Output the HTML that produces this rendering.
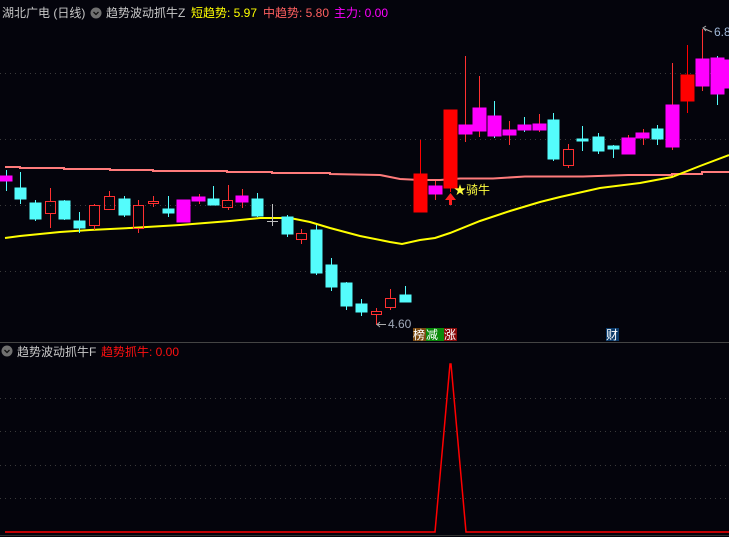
<!DOCTYPE html>
<html><head><meta charset="utf-8"><style>
html,body{margin:0;padding:0;background:#04040c;width:729px;height:537px;overflow:hidden}
svg{display:block}
text{font-family:"Liberation Sans","Noto Sans CJK SC",sans-serif}
</style></head><body>
<svg width="729" height="537" viewBox="0 0 729 537" xmlns="http://www.w3.org/2000/svg">
<rect width="729" height="537" fill="#04040c"/>
<g stroke="#3a3a3a" stroke-dasharray="1,4" stroke-width="1">
<line x1="0" y1="73.5" x2="729" y2="73.5"/><line x1="0" y1="139.5" x2="729" y2="139.5"/>
<line x1="0" y1="205.5" x2="729" y2="205.5"/><line x1="0" y1="271.5" x2="729" y2="271.5"/>
<line x1="0" y1="398.5" x2="729" y2="398.5"/><line x1="0" y1="431.5" x2="729" y2="431.5"/>
<line x1="0" y1="465.5" x2="729" y2="465.5"/><line x1="0" y1="498.5" x2="729" y2="498.5"/>
</g>
<line x1="0" y1="342.5" x2="729" y2="342.5" stroke="#444" stroke-width="1"/>
<line x1="0" y1="535.5" x2="729" y2="535.5" stroke="#333" stroke-width="1"/>
<!-- pink MA -->
<polyline fill="none" stroke="#ff7b7b" stroke-width="2" points="5,167 20,167 20,168 64,168 64,169 110,169 110,170 153,170 153,171 227,171 227,172 272,172 272,173 330,173 330,174 380,175 400,179 420,180 440,180 460,178.5 493,178.5 525,176.5 583,176.5 628,175 672,175 672,174 702,174 702,172 729,172"/>
<!-- yellow line -->
<polyline fill="none" stroke="#ffff00" stroke-width="2" points="5,238 20,236 40,234 60,232 90,230 130,228 180,225 230,221 260,218 290,218 310,222 330,228 360,236 390,242 402,244 420,240 435,238 450,233 480,221 510,211 540,202 560,197 600,188 640,183 672,177 700,166 729,155"/>
<g id="c">
<!-- candles: wick then body -->
<g stroke-width="1">
<!-- cyan -->
<g stroke="#54fcfc" fill="#54fcfc">
<line x1="20.5" y1="172" x2="20.5" y2="204"/><rect x="15" y="188" width="11" height="11"/>
<line x1="35.5" y1="200" x2="35.5" y2="221"/><rect x="30" y="203" width="11" height="16"/>
<line x1="64.5" y1="200" x2="64.5" y2="220"/><rect x="59" y="201" width="11" height="18"/>
<line x1="79.5" y1="212" x2="79.5" y2="233"/><rect x="74" y="221" width="11" height="7"/>
<line x1="124.5" y1="196" x2="124.5" y2="217"/><rect x="119" y="199" width="11" height="16"/>
<line x1="168.5" y1="196" x2="168.5" y2="217"/><rect x="163" y="209" width="11" height="4"/>
<line x1="213.5" y1="186" x2="213.5" y2="205"/><rect x="208" y="199" width="11" height="6"/>
<line x1="257.5" y1="193" x2="257.5" y2="217"/><rect x="252" y="199" width="11" height="17"/>
<line x1="287.5" y1="215" x2="287.5" y2="237"/><rect x="282" y="217" width="11" height="17"/>
<line x1="316.5" y1="225" x2="316.5" y2="275"/><rect x="311" y="230" width="11" height="43"/>
<line x1="331.5" y1="258" x2="331.5" y2="291"/><rect x="326" y="265" width="11" height="22"/>
<line x1="346.5" y1="282" x2="346.5" y2="310"/><rect x="341" y="283" width="11" height="23"/>
<line x1="361.5" y1="299" x2="361.5" y2="316"/><rect x="356" y="304" width="11" height="8"/>
<line x1="405.5" y1="286" x2="405.5" y2="302"/><rect x="400" y="295" width="11" height="7"/>
<line x1="553.5" y1="113" x2="553.5" y2="161"/><rect x="548" y="120" width="11" height="39"/>
<line x1="582.5" y1="126" x2="582.5" y2="151"/><rect x="577" y="139" width="11" height="2"/>
<line x1="598.5" y1="133" x2="598.5" y2="154"/><rect x="593" y="137" width="11" height="14"/>
<line x1="613.5" y1="145" x2="613.5" y2="158"/><rect x="608" y="146" width="11" height="3"/>
<line x1="657.5" y1="125" x2="657.5" y2="145"/><rect x="652" y="129" width="11" height="10"/>
<line x1="494.5" y1="101" x2="494.5" y2="116"/>
<line x1="717.5" y1="94" x2="717.5" y2="105"/>
</g>
<!-- magenta -->
<g stroke="#ff00ff" fill="#ff00ff">
<line x1="6.5" y1="170" x2="6.5" y2="191" stroke="#54fcfc"/><rect x="0" y="176" width="12" height="5"/>
<rect x="177" y="200" width="13" height="22"/>
<line x1="199.5" y1="194" x2="199.5" y2="204" stroke="#ff3030"/><rect x="192" y="197" width="13" height="4"/>
<line x1="242.5" y1="189" x2="242.5" y2="208" stroke="#ff3030"/><rect x="236" y="196" width="12" height="6"/>
<line x1="435.5" y1="181" x2="435.5" y2="200" stroke="#ff3030"/><rect x="429" y="186" width="13" height="8"/>
<line x1="465.5" y1="56" x2="465.5" y2="142" stroke="#ff3030"/><rect x="459" y="125" width="13" height="9"/>
<line x1="479.5" y1="76" x2="479.5" y2="137" stroke="#ff3030"/><rect x="473" y="108" width="13" height="23"/>
<line x1="494.5" y1="116" x2="494.5" y2="138" stroke="#54fcfc"/><rect x="488" y="116" width="13" height="20"/>
<line x1="509.5" y1="121" x2="509.5" y2="145" stroke="#ff3030"/><rect x="503" y="130" width="13" height="5"/>
<line x1="524.5" y1="117" x2="524.5" y2="132" stroke="#54fcfc"/><rect x="518" y="125" width="13" height="5"/>
<line x1="539.5" y1="114" x2="539.5" y2="132" stroke="#ff3030"/><rect x="533" y="124" width="13" height="6"/>
<line x1="628.5" y1="135" x2="628.5" y2="154" stroke="#ff3030"/><rect x="622" y="138" width="13" height="16"/>
<line x1="643.5" y1="129" x2="643.5" y2="145" stroke="#ff3030"/><rect x="636" y="133" width="13" height="5"/>
<line x1="672.5" y1="63" x2="672.5" y2="150" stroke="#ff3030"/><rect x="666" y="105" width="13" height="42"/>
<line x1="702.5" y1="29" x2="702.5" y2="91" stroke="#ff3030"/><rect x="696" y="59" width="13" height="27"/>
<line x1="717.5" y1="56" x2="717.5" y2="94" stroke="#54fcfc"/><rect x="711" y="58" width="13" height="36"/>
<rect x="725" y="60" width="5" height="28"/>
</g>
<!-- red filled -->
<g stroke="#ff0000" fill="#ff0000">
<line x1="420.5" y1="140" x2="420.5" y2="212"/><rect x="414" y="174" width="13" height="38"/>
<line x1="450.5" y1="110" x2="450.5" y2="192"/><rect x="444" y="110" width="13" height="78"/>
<line x1="687.5" y1="45" x2="687.5" y2="113"/><rect x="681" y="75" width="13" height="26"/>
</g>
<!-- red hollow -->
<g stroke="#ff3030" fill="none">
<line x1="50.5" y1="188" x2="50.5" y2="201"/><line x1="50.5" y1="213" x2="50.5" y2="228"/><rect x="45.5" y="201.5" width="10" height="12"/>
<line x1="94.5" y1="204" x2="94.5" y2="205"/><line x1="94.5" y1="225" x2="94.5" y2="230"/><rect x="89.5" y="205.5" width="10" height="20"/>
<line x1="109.5" y1="191" x2="109.5" y2="196"/><rect x="104.5" y="196.5" width="10" height="13"/>
<line x1="138.5" y1="200" x2="138.5" y2="205"/><line x1="138.5" y1="228" x2="138.5" y2="233"/><rect x="133.5" y="205.5" width="10" height="23"/>
<line x1="153.5" y1="196" x2="153.5" y2="207"/><rect x="148.5" y="201.5" width="10" height="2" fill="#04040c"/>
<line x1="228.5" y1="185" x2="228.5" y2="200"/><line x1="228.5" y1="207" x2="228.5" y2="210"/><rect x="222.5" y="200.5" width="10" height="7"/>
<line x1="301.5" y1="229" x2="301.5" y2="233"/><line x1="301.5" y1="239" x2="301.5" y2="244"/><rect x="296.5" y="233.5" width="10" height="6"/>
<line x1="376.5" y1="308" x2="376.5" y2="325"/><rect x="371.5" y="311.5" width="10" height="3" fill="#04040c"/>
<line x1="390.5" y1="289" x2="390.5" y2="298"/><line x1="390.5" y1="307" x2="390.5" y2="310"/><rect x="385.5" y="298.5" width="10" height="9"/>
<line x1="568.5" y1="144" x2="568.5" y2="149"/><line x1="568.5" y1="165" x2="568.5" y2="168"/><rect x="563.5" y="149.5" width="10" height="16"/>
</g>
<!-- gray cross -->
<g stroke="#c0c0c0"><line x1="272.5" y1="204" x2="272.5" y2="226"/><line x1="267" y1="221.5" x2="278" y2="221.5"/></g>
</g>
</g>
<!-- red arrow -->
<polygon points="450.5,193 445,200 449,200 449,205 452,205 452,200 456,200" fill="#ff2020"/>
<text x="454" y="194" font-size="12" fill="#ffff40">★骑牛</text>
<!-- 4.60 -->
<line x1="377" y1="324.5" x2="386" y2="324.5" stroke="#aaa"/><polyline points="380,322 377,324.5 380,327" fill="none" stroke="#aaa"/>
<text x="388" y="328" font-size="12" fill="#a0a8b8">4.60</text>
<!-- 6.8 -->
<line x1="704" y1="28.5" x2="712" y2="32" stroke="#aaa"/><polyline points="706,26 703,28 706,31" fill="none" stroke="#aaa"/>
<text x="714" y="36" font-size="12" fill="#a0b8d8">6.8</text>
<!-- tags -->
<rect x="413" y="328" width="13" height="13" fill="#7a4a10"/><rect x="426" y="328" width="13" height="13" fill="#0a8a0a"/><rect x="439" y="328" width="5" height="13" fill="#0a8a0a"/><rect x="444" y="328" width="13" height="13" fill="#8a0a0a"/>
<text x="413" y="339" font-size="12" fill="#fff">榜</text><text x="426" y="339" font-size="12" fill="#fff">减</text><text x="444" y="339" font-size="12" fill="#fff">涨</text>
<rect x="606" y="328" width="13" height="13" fill="#0a3a6a"/><text x="606" y="339" font-size="12" fill="#fff">财</text>
<!-- bottom indicator -->
<polyline fill="none" stroke="#ff0000" stroke-width="1.5" points="5,532 435,532 450,364 451,364 466,532 729,532"/>
<!-- headers -->
<text x="2" y="17" font-size="12" fill="#c8c8c8">湖北广电 (日线)</text>
<circle cx="96" cy="13" r="5.5" fill="#707070"/><polyline points="93.5,12 96,14.5 98.5,12" fill="none" stroke="#111" stroke-width="1.3"/>
<text x="106" y="17" font-size="12" fill="#c8c8c8">趋势波动抓牛Z</text>
<text x="191" y="17" font-size="12" fill="#ffff00">短趋势: 5.97</text>
<text x="263" y="17" font-size="12" fill="#ff6060">中趋势: 5.80</text>
<text x="334" y="17" font-size="12" fill="#ff00ff">主力: 0.00</text>
<circle cx="7" cy="351" r="5.5" fill="#707070"/><polyline points="4.5,350 7,352.5 9.5,350" fill="none" stroke="#111" stroke-width="1.3"/>
<text x="17" y="356" font-size="12" fill="#c8c8c8">趋势波动抓牛F</text>
<text x="101" y="356" font-size="12" fill="#ff1010">趋势抓牛: 0.00</text>
</svg>
</body></html>
